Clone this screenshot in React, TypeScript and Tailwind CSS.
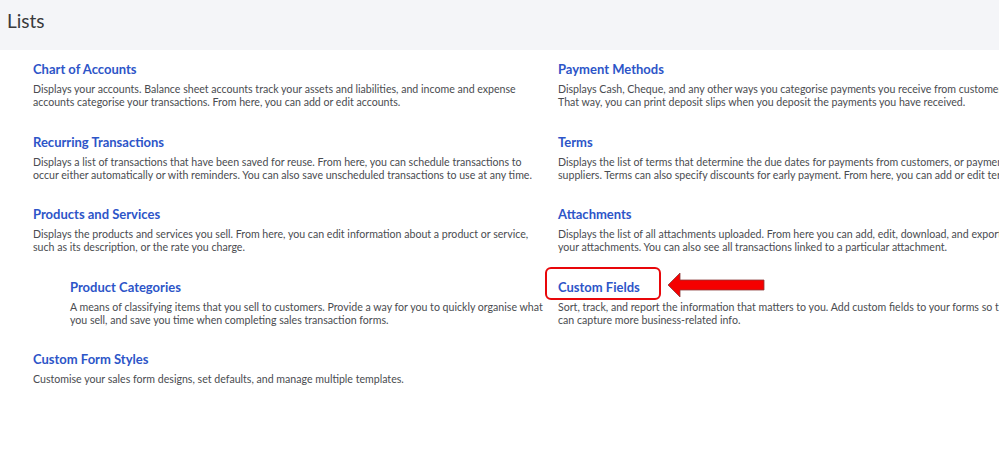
const left = [
  {
    title: 'Chart of Accounts',
    desc: 'Displays your accounts. Balance sheet accounts track your assets and liabilities, and income and expense accounts categorise your transactions. From here, you can add or edit accounts.',
  },
  {
    title: 'Recurring Transactions',
    desc: 'Displays a list of transactions that have been saved for reuse. From here, you can schedule transactions to occur either automatically or with reminders. You can also save unscheduled transactions to use at any time.',
  },
  {
    title: 'Products and Services',
    desc: 'Displays the products and services you sell. From here, you can edit information about a product or service, such as its description, or the rate you charge.',
  },
  {
    title: 'Product Categories',
    desc: 'A means of classifying items that you sell to customers. Provide a way for you to quickly organise what you sell, and save you time when completing sales transaction forms.',
    indent: true,
  },
  {
    title: 'Custom Form Styles',
    desc: 'Customise your sales form designs, set defaults, and manage multiple templates.',
  },
]

// descWidth keeps the line breaks where the original page had them
const right = [
  {
    title: 'Payment Methods',
    desc: 'Displays Cash, Cheque, and any other ways you categorise payments you receive from customers. That way, you can print deposit slips when you deposit the payments you have received.',
    descWidth: 'w-[465px]',
  },
  {
    title: 'Terms',
    desc: 'Displays the list of terms that determine the due dates for payments from customers, or payments to suppliers. Terms can also specify discounts for early payment. From here, you can add or edit terms.',
    descWidth: 'w-[470px]',
  },
  {
    title: 'Attachments',
    desc: 'Displays the list of all attachments uploaded. From here you can add, edit, download, and export your attachments. You can also see all transactions linked to a particular attachment.',
    descWidth: 'w-[461px]',
  },
  {
    title: 'Custom Fields',
    desc: 'Sort, track, and report the information that matters to you. Add custom fields to your forms so that you can capture more business-related info.',
    descWidth: 'w-[486px]',
    highlight: true,
  },
]

type Item = { title: string; desc: string; indent?: boolean; highlight?: boolean; descWidth?: string }

function ListItem({ item }: { item: Item }) {
  return (
    <div className={item.indent ? 'h-[72.5px] pl-[37px]' : 'h-[72.5px]'}>
      <div className="relative inline-block">
        <a className="block text-[13px] leading-[16px] font-bold text-[#2d55c8]">{item.title}</a>
        {item.highlight && (
          <>
            <div className="absolute left-[-13px] top-[-12px] w-[116px] h-[33px] border-[2.5px] border-[#e8070a] rounded-[6px]" />
            <svg
              className="absolute left-[109px] top-[-7px]"
              width="99"
              height="26"
              viewBox="0 0 99 26"
            >
              <polygon
                points="1,13 13,1 13,8 97,8 97,18 13,18 13,25"
                fill="#f50000"
                stroke="#8a3a3a"
                strokeWidth="0.8"
                strokeLinejoin="miter"
              />
            </svg>
          </>
        )}
      </div>
      <p className={`mt-[3px] text-[10.6px] leading-[13px] text-[#4a4c50] ${item.descWidth ?? ''}`}>{item.desc}</p>
    </div>
  )
}

export default function App() {
  return (
    <div className="w-[999px] h-[449px] overflow-hidden bg-white" style={{ fontFamily: 'Lato, "Noto Sans", sans-serif' }}>
      <div className="h-[50px] bg-[#f4f5f8] pl-[7px] pt-[9px]">
        <h1 className="text-[19px] leading-[24px] text-[#393a3d]">Lists</h1>
      </div>
      <div className="flex gap-x-[10px] pl-[33px] pt-[6px]">
        <div className="w-[515px] shrink-0">
          {left.map((item) => (
            <ListItem key={item.title} item={item} />
          ))}
        </div>
        <div className="w-[470px] shrink-0">
          {right.map((item) => (
            <ListItem key={item.title} item={item} />
          ))}
        </div>
      </div>
    </div>
  )
}
